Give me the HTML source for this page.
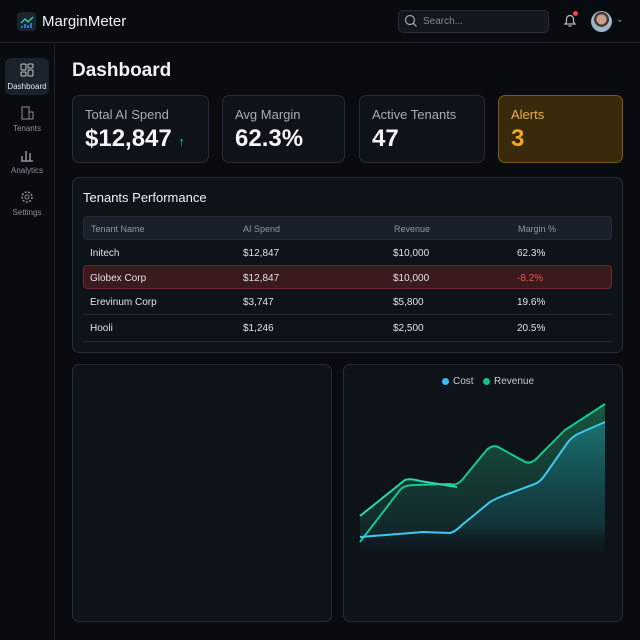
<!DOCTYPE html>
<html><head><meta charset="utf-8"><style>
*{box-sizing:border-box;margin:0;padding:0}
body{width:640px;height:640px;background:#080b10;font-family:"Liberation Sans",sans-serif;color:#e8ecf1;position:relative;overflow:hidden}
.a{position:absolute}
.card{position:absolute;border:1px solid #262c36;border-radius:7px;background:#0e131a}
.lbl{font-size:13px;color:#a7adb6;position:absolute;left:12px;top:11px}
.val{font-size:24px;font-weight:bold;color:#f3f5f8;position:absolute;left:12px;top:29px}
.nav{position:absolute;left:5px;width:44px;text-align:center;font-size:8px;color:#8a909a}
.th{position:absolute;font-size:9px;color:#8f96a0;top:7px}
.td{position:absolute;font-size:10px;color:#dfe3e8}
</style></head><body>
<div class="a" style="left:0;top:42px;width:640px;height:1px;background:#1d232c"></div>
<div class="a" style="left:54px;top:43px;width:1px;height:597px;background:#1d232c"></div>
<div class="a" style="left:17px;top:12px;width:19px;height:19px;border-radius:4px;background:#1c2430"></div>
<svg class="a" style="left:17px;top:12px" width="19" height="19"><path d="M4 11l4-4 3 3 5-5" stroke="#2fd08a" stroke-width="1.5" fill="none"/><path d="M5 16v-2M8 16v-4M11 16v-3M14 16v-5" stroke="#3a8ef0" stroke-width="1.6"/></svg>
<div class="a" style="left:42px;top:13px;font-size:15px;color:#f2f4f7">MarginMeter</div>
<div class="a" style="left:398px;top:10px;width:151px;height:23px;border:1px solid #272d37;border-radius:5px;background:#131820"></div>
<svg class="a" style="left:404px;top:14px" width="14" height="14"><circle cx="6" cy="6" r="4.5" stroke="#9aa0a8" stroke-width="1.3" fill="none"/><path d="M9.5 9.5l3 3" stroke="#9aa0a8" stroke-width="1.3"/></svg>
<div class="a" style="left:423px;top:16px;font-size:10px;color:#7f858e">Search...</div>
<svg class="a" style="left:562px;top:12px" width="16" height="17"><path d="M3 12h10l-1.5-2V7a3.5 3.5 0 0 0-7 0v3z M6.5 14h3" stroke="#b7bcc3" stroke-width="1.2" fill="none"/></svg>
<div class="a" style="left:573px;top:11px;width:5px;height:5px;border-radius:50%;background:#ef4444"></div>
<div class="a" style="left:591px;top:11px;width:21px;height:21px;border-radius:50%;background:radial-gradient(circle at 50% 40%,#c9a08a 0 30%,#4a3a32 31% 45%,#9eb6c8 46%)"></div>
<div class="a" style="left:616px;top:14px;font-size:9px;color:#9aa0a8">⌄</div>

<div class="a" style="left:5px;top:58px;width:44px;height:37px;border-radius:6px;background:#1c222b"></div>
<svg class="a" style="left:20px;top:63px" width="14" height="14"><rect x="1" y="1" width="5" height="6" rx="1" stroke="#c3c8ce" fill="none"/><rect x="8" y="1" width="5" height="4" rx="1" stroke="#c3c8ce" fill="none"/><rect x="1" y="9" width="5" height="4" rx="1" stroke="#c3c8ce" fill="none"/><rect x="8" y="7" width="5" height="6" rx="1" stroke="#c3c8ce" fill="none"/></svg>
<div class="nav" style="top:82px;color:#e1e5ea">Dashboard</div>
<svg class="a" style="left:20px;top:106px" width="14" height="14"><rect x="2" y="1" width="7" height="12" stroke="#8a909a" fill="none"/><rect x="9" y="6" width="4" height="7" stroke="#8a909a" fill="none"/></svg>
<div class="nav" style="top:124px">Tenants</div>
<svg class="a" style="left:20px;top:148px" width="14" height="14"><path d="M2 13V8M6 13V3M10 13V5M1 13h12" stroke="#8a909a" stroke-width="1.5" fill="none"/></svg>
<div class="nav" style="top:166px">Analytics</div>
<svg class="a" style="left:20px;top:190px" width="14" height="14"><circle cx="7" cy="7" r="2" stroke="#8a909a" fill="none"/><circle cx="7" cy="7" r="5" stroke="#8a909a" stroke-dasharray="2 1.5" stroke-width="1.6" fill="none"/></svg>
<div class="nav" style="top:208px">Settings</div>

<div class="a" style="left:72px;top:60px;font-size:19px;font-weight:bold;color:#f0f2f5">Dashboard</div>
<div class="card" style="left:72px;top:95px;width:137px;height:68px"><div class="lbl">Total AI Spend</div><div class="val">$12,847 <span style="font-size:13px;color:#22c57a">↑</span></div></div>
<div class="card" style="left:222px;top:95px;width:123px;height:68px"><div class="lbl">Avg Margin</div><div class="val">62.3%</div></div>
<div class="card" style="left:359px;top:95px;width:126px;height:68px"><div class="lbl">Active Tenants</div><div class="val">47</div></div>
<div class="card" style="left:498px;top:95px;width:125px;height:68px;background:#3a2a0c;border-color:#7a5a1c"><div class="lbl" style="color:#e8b252">Alerts</div><div class="val" style="color:#f5a524">3</div></div>

<div class="card" style="left:72px;top:177px;width:551px;height:176px">
<div class="a" style="left:10px;top:12px;font-size:13px;color:#f0f2f5">Tenants Performance</div>
<div class="a" style="left:10px;top:38px;width:529px;height:24px;background:#1a2029;border:1px solid #252b35;border-radius:4px">
<div class="th" style="left:7px">Tenant Name</div><div class="th" style="left:159px">AI Spend</div><div class="th" style="left:310px">Revenue</div><div class="th" style="left:434px">Margin %</div></div>
<div class="a" style="left:10px;top:87px;width:529px;height:24px;background:#3a1a1c;border:1px solid #6a2a2c;border-radius:4px"></div>
<div class="a" style="left:10px;top:136px;width:529px;height:1px;background:#222832"></div>
<div class="a" style="left:10px;top:163px;width:529px;height:1px;background:#222832"></div>
<div class="td" style="left:17px;top:70px">Initech</div><div class="td" style="left:170px;top:70px">$12,847</div><div class="td" style="left:320px;top:70px">$10,000</div><div class="td" style="left:444px;top:70px">62.3%</div>
<div class="td" style="left:17px;top:95px">Globex Corp</div><div class="td" style="left:170px;top:95px">$12,847</div><div class="td" style="left:320px;top:95px">$10,000</div><div class="td" style="left:444px;top:95px;color:#ef5350">-8.2%</div>
<div class="td" style="left:17px;top:119px">Erevinum Corp</div><div class="td" style="left:170px;top:119px">$3,747</div><div class="td" style="left:320px;top:119px">$5,800</div><div class="td" style="left:444px;top:119px">19.6%</div>
<div class="td" style="left:17px;top:145px">Hooli</div><div class="td" style="left:170px;top:145px">$1,246</div><div class="td" style="left:320px;top:145px">$2,500</div><div class="td" style="left:444px;top:145px">20.5%</div>
</div>

<div class="card" style="left:72px;top:364px;width:260px;height:258px"></div>
<div class="card" style="left:343px;top:364px;width:280px;height:258px"></div>
<div class="a" style="left:442px;top:378px;width:7px;height:7px;border-radius:50%;background:#38bdf8"></div>
<div class="a" style="left:453px;top:376px;font-size:10px;color:#c5cad1">Cost</div>
<div class="a" style="left:483px;top:378px;width:7px;height:7px;border-radius:50%;background:#10c48a"></div>
<div class="a" style="left:494px;top:376px;font-size:10px;color:#c5cad1">Revenue</div>
<svg class="a" style="left:0;top:0" width="640" height="640">
<defs><linearGradient id="g" x1="0" y1="0" x2="0" y2="1"><stop offset="0" stop-color="#1f8a86" stop-opacity=".8"/><stop offset=".75" stop-color="#13494d" stop-opacity=".6"/><stop offset="1" stop-color="#0e131a" stop-opacity="0"/></linearGradient>
<linearGradient id="g2" x1="0" y1="0" x2="0" y2="1"><stop offset="0" stop-color="#1a6a4a" stop-opacity=".8"/><stop offset="1" stop-color="#163a3a" stop-opacity=".5"/></linearGradient></defs>
<path d="M360 516L405 480Q410 478 420 481L457 487L485 452Q492 443 500 448L533 463L570 427L605 404V422L573 435L538 483L497 497L455 533L423 532L360 537Z" fill="url(#g2)"/>
<path d="M360 537L423 532L455 533L497 497L538 483L573 435L605 422V560H360Z" fill="url(#g)"/>
<path d="M360 542L400 490Q404 485 415 485L450 484Q457 486 462 480L485 452Q492 443 500 448L525 462Q532 465 540 455L565 430L605 404" stroke="#14c98a" stroke-width="2" fill="none"/>
<path d="M360 516L405 480Q410 478 420 481L457 487" stroke="#2dd4b0" stroke-width="2" fill="none"/>
<path d="M360 537L423 532L450 533Q455 532 462 525L490 502Q495 499 505 495L535 484Q540 482 545 475L568 442Q573 436 580 433L605 422" stroke="#3fc8f0" stroke-width="2" fill="none"/>
</svg>
</body></html>
